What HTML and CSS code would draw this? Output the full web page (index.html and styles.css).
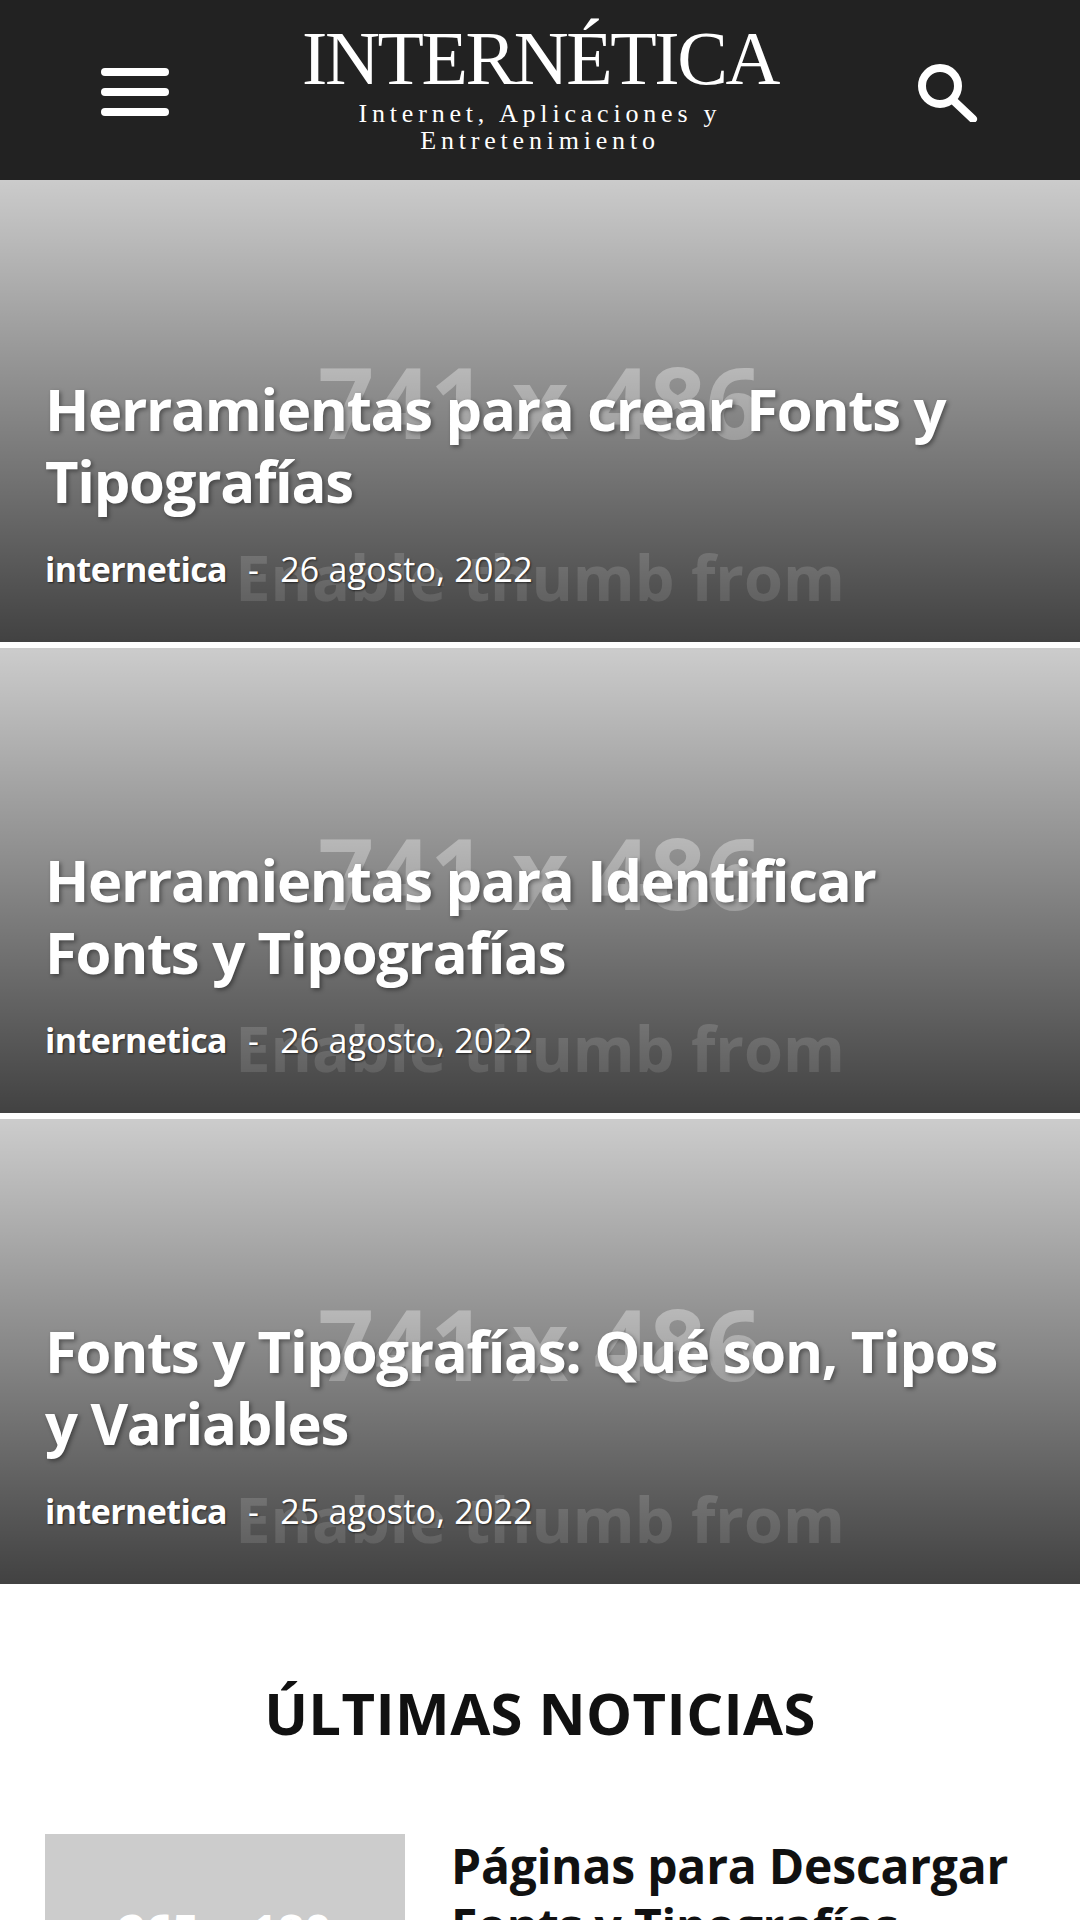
FILE: index.html
```html
<!DOCTYPE html>
<html lang="es">

<head>
  <meta charset="UTF-8">
  <meta name="viewport" content="width=device-width, initial-scale=1.0">
  <title>Internética</title>
  <link rel="stylesheet" href="styles.css">
</head>

<body>
  <header class="site-header">
    <button class="icon-btn" title="Menú">
      <svg width="68" height="48" viewBox="0 0 68 48">
        <rect x="0" y="0" width="68" height="8" rx="4" />
        <rect x="0" y="20" width="68" height="8" rx="4" />
        <rect x="0" y="40" width="68" height="8" rx="4" />
      </svg>
    </button>

    <a class="logo" href="#">
      <span class="logo-name">INTERNÉTICA</span>
      <span class="logo-tagline">Internet, Aplicaciones y Entretenimiento</span>
    </a>

    <button class="icon-btn" title="Buscar">
      <svg width="68" height="60" viewBox="0 0 68 60">
        <circle cx="29" cy="24" r="18" class="search-stroke" />
        <path d="M44 40 L62 57" class="search-stroke" />
      </svg>
    </button>
  </header>

  <main>
    <section class="featured">
      <article class="hero">
        <div class="hero-thumb">
          <span class="thumb-size">741 x 486</span>
          <span class="thumb-note">Enable thumb from</span>
        </div>
        <div class="hero-shade"></div>
        <div class="hero-body">
          <h2 class="hero-title">Herramientas para crear Fonts y Tipografías</h2>
          <p class="hero-meta"><strong>internetica</strong><span class="sep">-</span>26 agosto, 2022</p>
        </div>
      </article>

      <article class="hero">
        <div class="hero-thumb">
          <span class="thumb-size">741 x 486</span>
          <span class="thumb-note">Enable thumb from</span>
        </div>
        <div class="hero-shade"></div>
        <div class="hero-body">
          <h2 class="hero-title">Herramientas para Identificar Fonts y Tipografías</h2>
          <p class="hero-meta"><strong>internetica</strong><span class="sep">-</span>26 agosto, 2022</p>
        </div>
      </article>

      <article class="hero">
        <div class="hero-thumb">
          <span class="thumb-size">741 x 486</span>
          <span class="thumb-note">Enable thumb from</span>
        </div>
        <div class="hero-shade"></div>
        <div class="hero-body">
          <h2 class="hero-title">Fonts y Tipografías: Qué son, Tipos y Variables</h2>
          <p class="hero-meta"><strong>internetica</strong><span class="sep">-</span>25 agosto, 2022</p>
        </div>
      </article>
    </section>

    <section class="latest">
      <h2 class="latest-heading">ÚLTIMAS NOTICIAS</h2>

      <article class="news-item">
        <div class="news-thumb">265 x 180</div>
        <h3 class="news-title">Páginas para Descargar Fonts y Tipografías</h3>
      </article>
    </section>
  </main>
</body>

</html>
```

FILE: styles.css
```css
html,
body {
  height: 1920px;
  overflow: hidden;
}

body {
  margin: 0;
  font-family: 'Open Sans', 'Noto Sans', Arial, sans-serif;
  background-color: #ffffff;
  color: #111111;
}

h2,
h3,
p {
  margin: 0;
}

.site-header {
  position: relative;
  z-index: 2;
  display: flex;
  align-items: center;
  justify-content: space-between;
  height: 180px;
  padding: 0 101px;
  box-sizing: border-box;
  background-color: #222222;
}

.icon-btn {
  display: flex;
  padding: 0;
  margin-top: 4px;
  border: none;
  background: none;
  fill: #ffffff;
  cursor: pointer;
}

.search-stroke {
  fill: none;
  stroke: #ffffff;
  stroke-width: 8;
  stroke-linecap: round;
}

.logo {
  display: flex;
  flex-direction: column;
  align-items: center;
  width: 480px;
  margin-bottom: 10px;
  color: #ffffff;
  font-family: 'Liberation Serif', 'Times New Roman', serif;
  text-align: center;
  text-decoration: none;
}

.logo-name {
  font-size: 76px;
  line-height: 84px;
  letter-spacing: -2.4px;
  white-space: nowrap;
}

.logo-tagline {
  width: 400px;
  font-size: 26px;
  line-height: 27px;
  letter-spacing: 4.8px;
}

.featured {
  display: flex;
  flex-direction: column;
  gap: 6px;
  margin-top: -3px;
}

/* thumb, shade and text share one grid cell */
.hero {
  display: grid;
  height: 465px;
  overflow: hidden;
  color: #ffffff;
}

.hero > * {
  grid-area: 1 / 1;
}

.hero-thumb {
  display: flex;
  flex-direction: column;
  align-items: center;
  padding-top: 159px;
  background-color: #cccccc;
  color: #ffffff;
  font-weight: 700;
  white-space: nowrap;
}

.thumb-size {
  font-size: 98px;
  line-height: 130px;
}

.thumb-note {
  margin-top: 66px;
  font-size: 63px;
  line-height: 90px;
}

.hero-shade {
  background: linear-gradient(rgba(0, 0, 0, 0), rgba(0, 0, 0, 0.68));
}

.hero-body {
  display: flex;
  flex-direction: column;
  justify-content: flex-end;
  padding: 0 45px 51px;
}

.hero-title {
  font-size: 58px;
  font-weight: 700;
  line-height: 72px;
  letter-spacing: -1.3px;
  text-shadow: 2px 2px 4px rgba(0, 0, 0, 0.4);
}

.hero-meta {
  margin-top: 30px;
  font-size: 34px;
  line-height: 44px;
  letter-spacing: 0.2px;
  text-shadow: 1px 1px 2px rgba(0, 0, 0, 0.6);
}

.hero-meta strong {
  font-weight: 700;
  letter-spacing: -0.6px;
}

.sep {
  margin: 0 21px;
}

.latest {
  padding: 0 45px;
}

.latest-heading {
  margin-top: 89px;
  font-size: 58px;
  font-weight: 700;
  line-height: 80px;
  letter-spacing: 0.4px;
  text-align: center;
}

.news-item {
  display: flex;
  gap: 46px;
  margin-top: 81px;
}

.news-thumb {
  flex: none;
  width: 360px;
  height: 245px;
  padding-top: 64px;
  box-sizing: border-box;
  background-color: #cccccc;
  color: #ffffff;
  font-size: 47px;
  font-weight: 700;
  text-align: center;
}

.news-title {
  padding-top: 2px;
  font-size: 48px;
  font-weight: 700;
  line-height: 60px;
  letter-spacing: -0.2px;
}
```
